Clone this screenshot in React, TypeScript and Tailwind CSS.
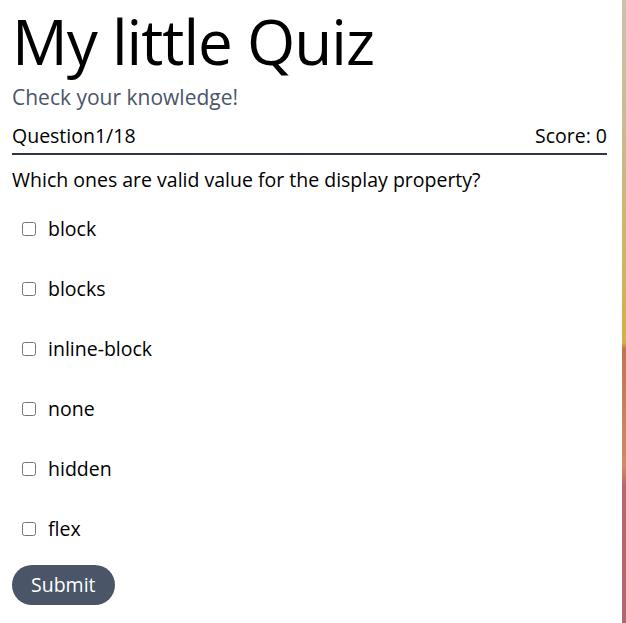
import { useState } from 'react';

const options = ['block', 'blocks', 'inline-block', 'none', 'hidden', 'flex'];

export default function App() {
  const [checked, setChecked] = useState<string[]>([]);

  const toggle = (value: string) =>
    setChecked((prev) => (prev.includes(value) ? prev.filter((v) => v !== value) : [...prev, value]));

  return (
    <div className="flex min-h-screen font-['Open_Sans',sans-serif] text-black">
      <div className="flex-1 bg-white pl-3 pr-[15px]">
        <h1 className="mt-[4px] text-[62px] leading-[74px] tracking-[-1px]">My little Quiz</h1>
        <p className="mt-[5px] text-[21px] leading-[28px] text-[#4a5568]">Check your knowledge!</p>

        <div className="mt-[12px] flex justify-between border-b-2 border-[#2d3748] pb-[4px] text-[19.5px] leading-[26px]">
          <span>Question1/18</span>
          <span>Score: 0</span>
        </div>

        <p className="mt-[12px] text-[19.5px] leading-[26px]">Which ones are valid value for the display property?</p>

        <form className="mt-[11px]" onSubmit={(e) => e.preventDefault()}>
          {options.map((opt) => (
            <label key={opt} className="flex h-[60px] items-start pt-[12px] text-[19.5px] leading-[26px]">
              <input
                type="checkbox"
                className="ml-[10px] mr-[12px] mt-[6px] h-[14px] w-[14px]"
                checked={checked.includes(opt)}
                onChange={() => toggle(opt)}
              />
              <span>{opt}</span>
            </label>
          ))}

          <button
            type="submit"
            className="mt-[1px] h-[40px] rounded-full bg-[#4a5568] px-[19px] text-[19.5px] leading-[26px] text-white"
          >
            Submit
          </button>
        </form>
      </div>
      <div className="w-[4px] bg-[linear-gradient(to_bottom,#c8c2b0_0%,#c9b98a_25%,#d2b048_55%,#c07454_56%,#d08a68_75%,#b46a6a_78%,#b06870_100%)]" />
    </div>
  );
}
